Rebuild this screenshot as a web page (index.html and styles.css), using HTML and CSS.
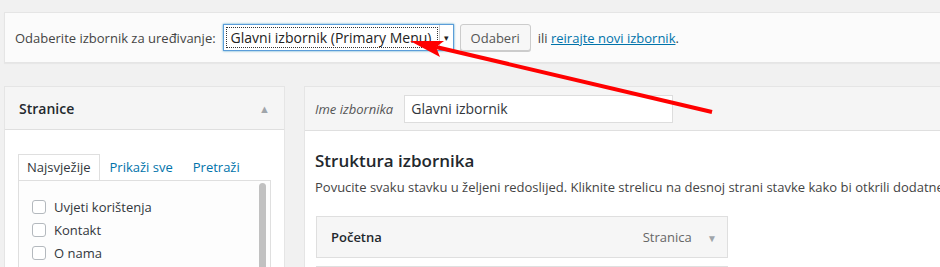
FILE: index.html
```html
<!DOCTYPE html>
<html lang="hr">
<head>
    <meta charset="UTF-8">
    <meta name="viewport" content="width=device-width, initial-scale=1.0">
    <title>Izbornici</title>
    <link rel="stylesheet" href="styles.css">
</head>
<body>
    <div class="wrap">
        <div class="manage-menus">
            <span class="select-label">Odaberite izbornik za uređivanje:</span>
            <div class="fake-select">
                <span class="fake-select-value">Glavni izbornik (Primary Menu)</span>
                <span class="fake-select-arrow">&#9662;</span>
            </div>
            <button type="button" class="button">Odaberi</button>
            <span class="or-link">ili <a href="#">reirajte novi izbornik</a>.</span>
        </div>

        <div class="columns">
            <!-- left: add items -->
            <div class="sidebar">
                <div class="section-title">
                    <h3>Stranice</h3>
                    <span class="toggle">&#9650;</span>
                </div>
                <div class="section-body">
                    <ul class="tabs">
                        <li class="tab active">Najsvježije</li>
                        <li class="tab">Prikaži sve</li>
                        <li class="tab">Pretraži</li>
                    </ul>
                    <div class="tab-panel">
                        <ul class="checklist">
                            <li><span class="checkbox"></span>Uvjeti korištenja</li>
                            <li><span class="checkbox"></span>Kontakt</li>
                            <li><span class="checkbox"></span>O nama</li>
                        </ul>
                        <div class="scrollbar"></div>
                    </div>
                </div>
            </div>

            <!-- right: menu editor -->
            <div class="menu-edit">
                <div class="menu-header">
                    <label class="menu-name-label">Ime izbornika</label>
                    <div class="text-input">Glavni izbornik</div>
                </div>
                <div class="menu-body">
                    <h3>Struktura izbornika</h3>
                    <p class="hint">Povucite svaku stavku u željeni redoslijed. Kliknite strelicu na desnoj strani stavke kako bi otkrili dodatne</p>
                    <div class="menu-item">
                        <span class="item-title">Početna</span>
                        <span class="item-type">Stranica <span class="item-arrow">&#9660;</span></span>
                    </div>
                    <div class="menu-item"></div>
                </div>
            </div>
        </div>
    </div>

    <svg class="annotation" width="940" height="267" viewBox="0 0 940 267">
        <line x1="712" y1="112" x2="436" y2="47" stroke="#ff0000" stroke-width="4"/>
        <polygon points="410,41 444,41 436,47 440,57" fill="#ff0000"/>
    </svg>
</body>
</html>
```

FILE: styles.css
```css
body {
    font-family: "Open Sans", sans-serif;
    font-size: 13px;
    color: #444;
    background-color: #f1f1f1;
    margin: 0;
    padding: 0;
    height: 267px;
    overflow: hidden;
}
.wrap {
    width: 1000px;
    padding: 12px 0 0 4px;
}
.manage-menus {
    display: flex;
    align-items: center;
    height: 49px;
    padding-left: 10px;
    border: 1px solid #e5e5e5;
    background-color: #fbfbfb;
    box-shadow: 0 1px 1px rgba(0, 0, 0, 0.04);
}
.select-label {
    color: #444;
}
.fake-select {
    display: flex;
    align-items: stretch;
    width: 229px;
    height: 25px;
    margin-left: 7px;
    border: 1px solid #5b9dd9;
    box-shadow: 0 0 2px rgba(30, 140, 190, 0.8);
    background: #fff;
}
.fake-select-value {
    flex-grow: 1;
    margin: 2px 1px 2px 2px;
    padding-left: 4px;
    border: 1px dotted #333;
    font-size: 14px;
    line-height: 19px;
    color: #222;
}
.fake-select-arrow {
    width: 13px;
    border-left: 1px solid #ccc;
    text-align: center;
    font-size: 9px;
    line-height: 25px;
    color: #222;
}
.button {
    height: 27px;
    margin-left: 6px;
    padding: 0 10px;
    border: 1px solid #ccc;
    border-radius: 3px;
    background: #f7f7f7;
    box-shadow: 0 1px 0 #ccc;
    font-family: "Open Sans", sans-serif;
    font-size: 13px;
    color: #555;
}
.or-link {
    margin-left: 7px;
}
.or-link a {
    color: #0073aa;
}
.columns {
    display: flex;
    gap: 19px;
    margin-top: 23px;
}
.sidebar {
    flex-shrink: 0;
    width: 279px;
    height: 200px;
    border: 1px solid #e5e5e5;
    background: #fff;
}
.section-title {
    display: flex;
    justify-content: space-between;
    align-items: center;
    height: 42px;
    padding: 0 14px;
    background: #f5f5f5;
    border-bottom: 1px solid #dfdfdf;
}
.section-title h3 {
    margin: 0;
    font-size: 14px;
    font-weight: 600;
    color: #23282d;
}
.toggle {
    font-size: 11px;
    color: #a0a5aa;
}
.section-body {
    padding: 24px 13px 0 13px;
}
.tabs {
    display: flex;
    margin: 0;
    padding: 0;
    list-style: none;
}
.tab {
    height: 25px;
    line-height: 25px;
    padding: 0 9px;
    font-size: 13px;
    white-space: nowrap;
    color: #0073aa;
    border: 1px solid transparent;
    border-bottom: none;
}
.tab.active {
    color: #32373c;
    padding: 0 8px;
    border-color: #dfdfdf;
    background: #fff;
    margin-bottom: -1px;
    position: relative;
}
.tab-panel {
    display: flex;
    justify-content: space-between;
    height: 120px;
    border: 1px solid #dfdfdf;
    background: #fdfdfd;
}
.checklist {
    margin: 0;
    padding: 14px 0 0 13px;
    list-style: none;
}
.checklist li {
    display: flex;
    align-items: center;
    height: 23px;
    color: #32373c;
}
.checkbox {
    width: 14px;
    height: 14px;
    margin-right: 8px;
    border: 1px solid #b4b9be;
    border-radius: 3px;
    background: #fff;
    box-sizing: border-box;
}
.scrollbar {
    width: 7px;
    margin: 2px 4px 0 0;
    border-radius: 4px;
    background: #c1c1c1;
}
.menu-edit {
    flex-grow: 1;
    height: 200px;
    border: 1px solid #e5e5e5;
    background: #fff;
}
.menu-header {
    display: flex;
    align-items: center;
    height: 43px;
    padding-left: 10px;
    background: #f5f5f5;
    border-bottom: 1px solid #dfdfdf;
}
.menu-name-label {
    font-style: italic;
    color: #555;
    margin-right: 11px;
}
.text-input {
    width: 261px;
    height: 26px;
    padding-left: 6px;
    border: 1px solid #ddd;
    background: #fff;
    font-size: 14px;
    line-height: 26px;
    color: #32373c;
}
.menu-body {
    padding: 0 10px;
}
.menu-body h3 {
    margin: 18px 0 0 0;
    font-size: 17px;
    font-weight: 600;
    color: #23282d;
}
.hint {
    margin: 6px 0 0 0;
    white-space: nowrap;
    color: #444;
}
.menu-item {
    display: flex;
    justify-content: space-between;
    align-items: center;
    width: 386px;
    height: 40px;
    margin: 20px 0 0 1px;
    padding: 0 10px 0 14px;
    border: 1px solid #dfdfdf;
    background: #f6f6f6;
}
.menu-item + .menu-item {
    margin-top: 8px;
}
.item-title {
    font-weight: 600;
    color: #23282d;
}
.item-type {
    color: #666;
}
.item-arrow {
    margin-left: 12px;
    font-size: 10px;
    color: #a0a5aa;
}
.annotation {
    position: absolute;
    top: 0;
    left: 0;
    pointer-events: none;
}
```
